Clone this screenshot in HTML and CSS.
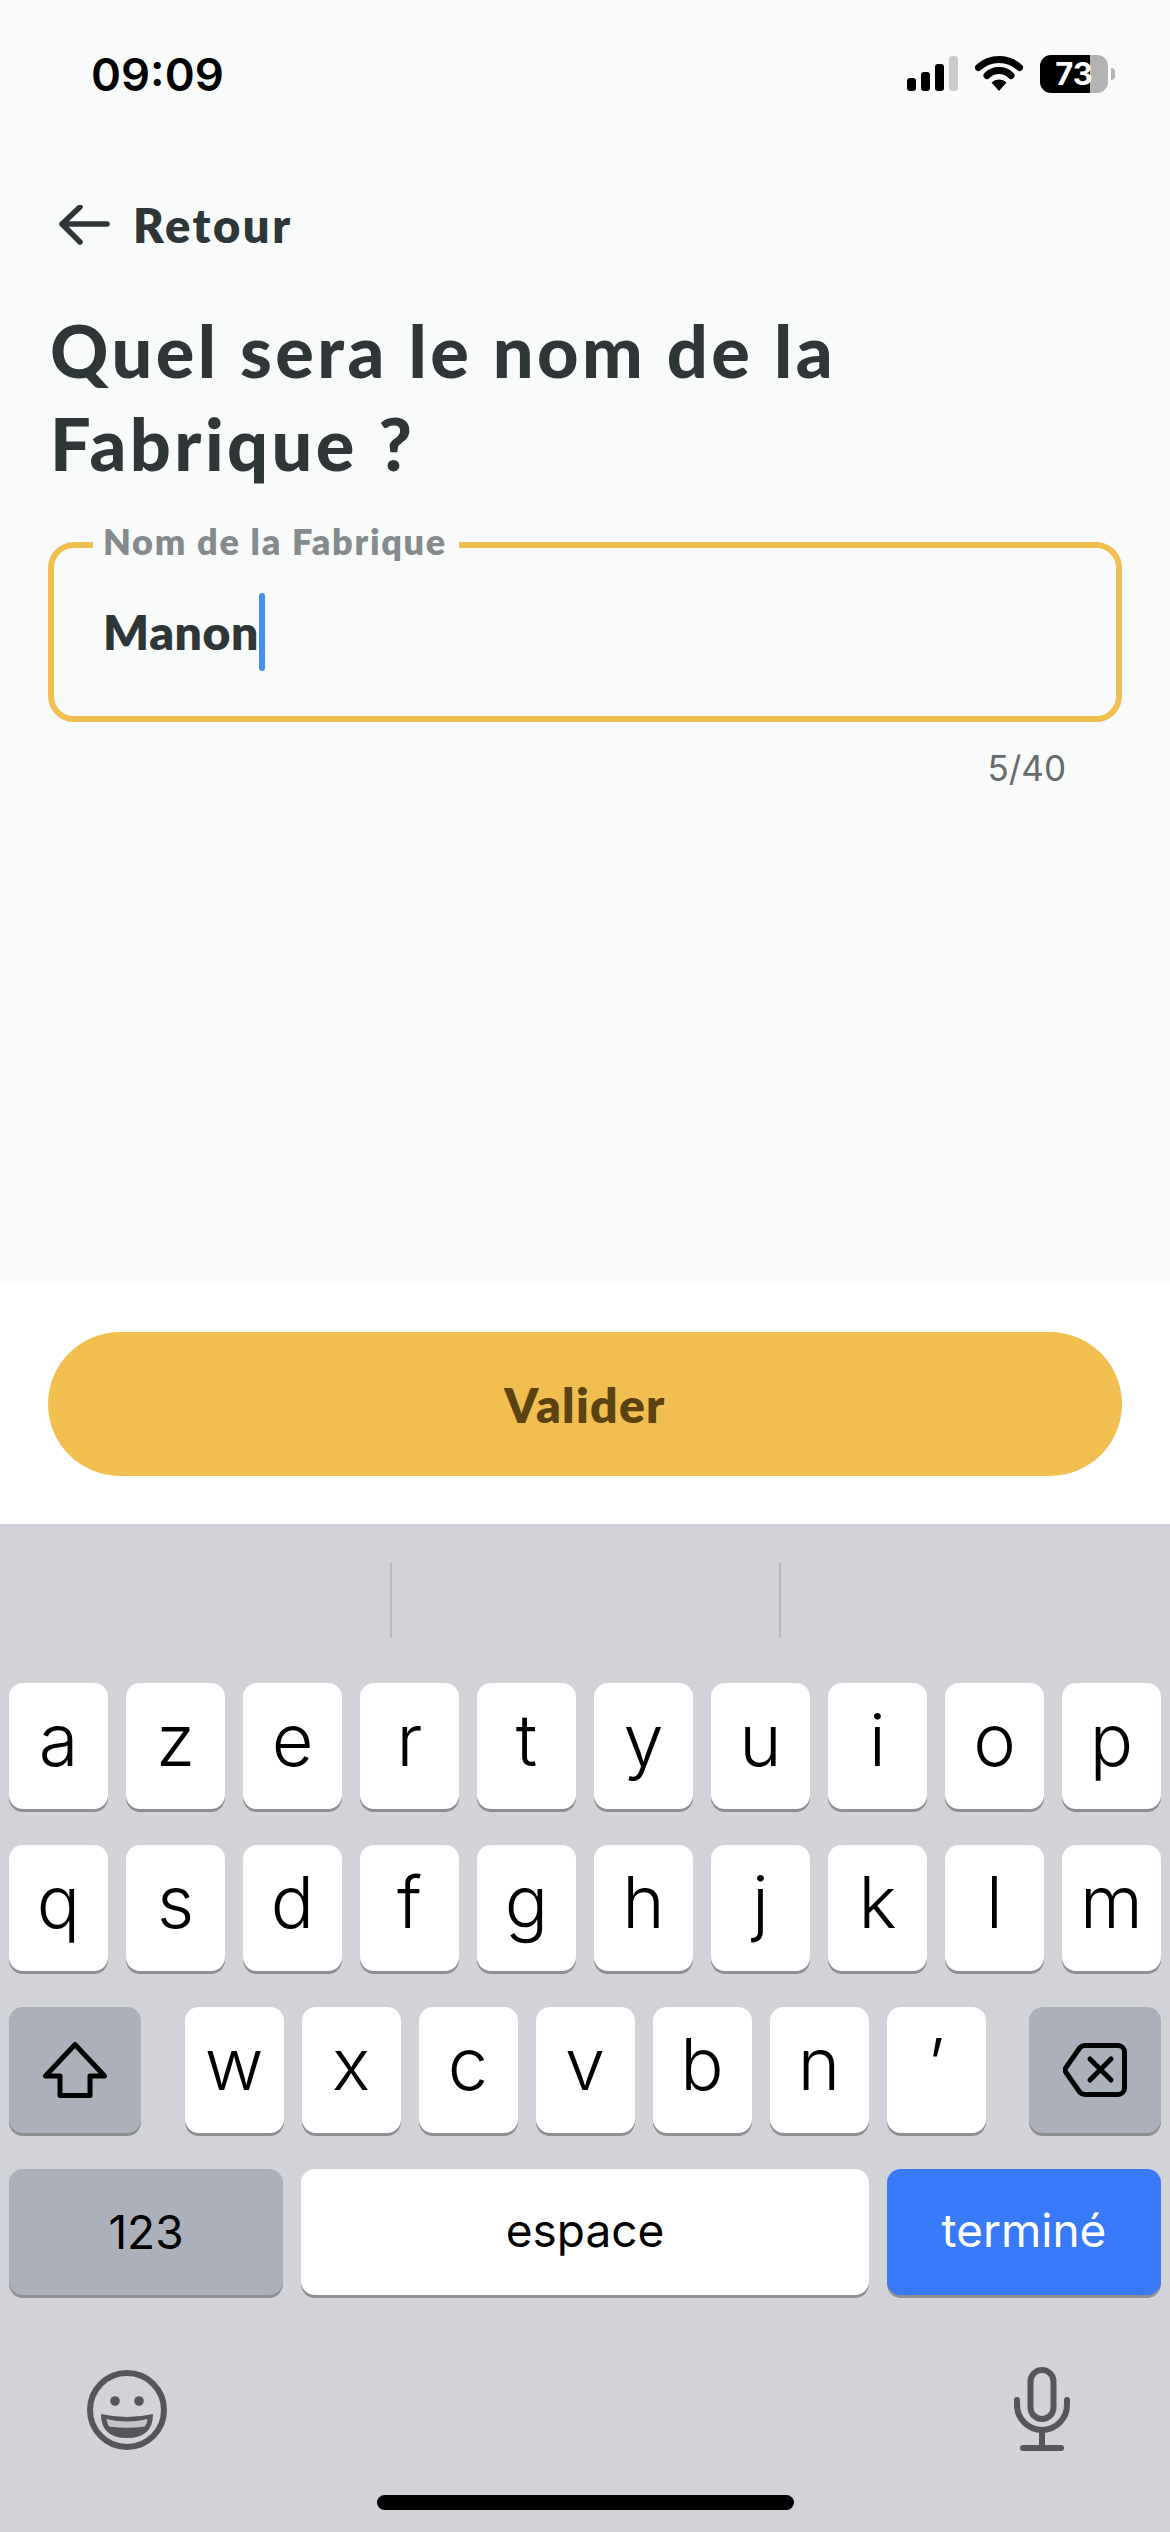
FILE: index.html
```html
<!DOCTYPE html>
<html lang="fr">
<head>
<meta charset="utf-8">
<title>Nom de la Fabrique</title>
<link rel="stylesheet" href="styles.css">
</head>
<body>
<div class="screen">
  <header class="status">
    <span class="time">09:09</span>
    <div class="status-icons">
      <svg class="signal" width="54" height="36" viewBox="0 0 54 36"><rect x="0" y="22" width="9" height="13" rx="3"/><rect x="14" y="16" width="9" height="19" rx="3"/><rect x="28" y="8" width="9" height="27" rx="3"/><rect x="42" y="0" width="9" height="35" rx="3" fill="#cbcccb"/></svg>
      <svg class="wifi" width="48" height="36" viewBox="0 0 48 36"><path d="M3.5 12.5A30 30 0 0 1 44.5 12.5" fill="none" stroke="#000" stroke-width="7" stroke-linecap="round"/><path d="M12 20.5A17 17 0 0 1 36 20.5" fill="none" stroke="#000" stroke-width="7" stroke-linecap="round"/><path d="M16.5 27.5A11 11 0 0 1 31.5 27.5L24 36Z"/></svg>
      <div class="battery"><div class="battery-body"><span class="battery-text">73</span></div><span class="battery-nub"></span></div>
    </div>
  </header>

  <main class="content">
    <a class="back">
      <svg width="52" height="40" viewBox="0 0 52 40"><path d="M49 19H4M22 2L4 19L22 37" fill="none" stroke="#2f3638" stroke-width="5.500" stroke-linecap="round" stroke-linejoin="round"/></svg>
      <span>Retour</span>
    </a>
    <h1 class="title">Quel sera le nom de la<br>Fabrique ?</h1>
    <div class="field">
      <span class="field-label">Nom de la Fabrique</span>
      <span class="field-value">Manon</span><span class="caret"></span>
    </div>
    <div class="counter">5/40</div>
  </main>

  <section class="footer"><button class="submit">Valider</button></section>

  <section class="keyboard">
    <div class="suggestions"><span class="sep"></span><span class="sep"></span></div>
    <div class="rows">
      <div class="row">
        <span class="key">a</span><span class="key">z</span><span class="key">e</span><span class="key">r</span><span class="key">t</span><span class="key">y</span><span class="key">u</span><span class="key">i</span><span class="key">o</span><span class="key">p</span>
      </div>
      <div class="row">
        <span class="key">q</span><span class="key">s</span><span class="key">d</span><span class="key">f</span><span class="key">g</span><span class="key">h</span><span class="key">j</span><span class="key">k</span><span class="key">l</span><span class="key">m</span>
      </div>
      <div class="row row-split">
        <span class="key key-mod">
          <svg width="66" height="58" viewBox="0 0 66 58"><path d="M33 3.500L3.500 35H18V54.500H48V35H62.500Z" fill="none" stroke="#000" stroke-width="5" stroke-linejoin="round"/></svg>
        </span>
        <div class="letters"><span class="key">w</span><span class="key">x</span><span class="key">c</span><span class="key">v</span><span class="key">b</span><span class="key">n</span><span class="key">’</span></div>
        <span class="key key-mod">
          <svg width="64" height="54" viewBox="0 0 64 54"><path d="M22 2.500H55A6.500 6.500 0 0 1 61.500 9V45A6.500 6.500 0 0 1 55 51.500H22Q19 51.500 17 49.500L3 29.500Q1.500 27 3 24.500L17 4.500Q19 2.500 22 2.500Z" fill="none" stroke="#000" stroke-width="5" stroke-linejoin="round"/><path d="M27 16L48 37M48 16L27 37" fill="none" stroke="#000" stroke-width="5" stroke-linecap="round"/></svg>
        </span>
      </div>
      <div class="row">
        <span class="key key-mod key-wide key-label">123</span>
        <span class="key key-space key-label key-raised">espace</span>
        <span class="key key-done key-label key-raised">terminé</span>
      </div>
    </div>
    <div class="kb-tools">
      <svg class="emoji" width="80" height="80" viewBox="0 0 80 80"><circle cx="40" cy="40" r="37" fill="none" stroke="#54565b" stroke-width="6"/><circle cx="28" cy="31" r="4.800" fill="#54565b"/><circle cx="52" cy="31" r="4.800" fill="#54565b"/><path d="M14 44Q40 50 66 44Q66 68 40 68Q14 68 14 44Z" fill="#54565b"/><path d="M19.500 49Q40 54 60.500 49Q60 54 58 56.500Q40 59 22 56.500Q20 54 19.500 49Z" fill="#c2c4c9"/></svg>
      <svg class="mic" width="56" height="84" viewBox="0 0 56 84"><rect x="16.500" y="3" width="23" height="49" rx="11.500" fill="none" stroke="#54565b" stroke-width="6"/><path d="M3 33V38A25 25 0 0 0 53 38V33M28 63V80M9 81H47" fill="none" stroke="#54565b" stroke-width="6" stroke-linecap="round"/></svg>
    </div>
    <div class="home-bar"></div>
  </section>
</div>
</body>
</html>
```
FILE: styles.css
```css
* { box-sizing: border-box; }
html, body { margin: 0; padding: 0; }
body { font-family: "Lato", "Noto Sans", sans-serif; background: #f9fbfa; }
.screen { width: 1170px; height: 2532px; display: flex; flex-direction: column; overflow: hidden; }

.status { height: 110px; display: flex; justify-content: space-between; padding: 47px 55px 0 91px; flex: none; }
.time { font-family: "Inter", sans-serif; font-weight: 600; font-size: 45.5px; line-height: 55px; color: #000; }
.status-icons { display: flex; align-items: flex-start; padding-top: 8px; }
.signal { margin: 1px 0 0 0; }
.wifi { margin: 0 0 0 14px; }
.battery { display: flex; align-items: center; margin-left: 17px; height: 38px; }
.battery-body { width: 68px; height: 38px; border-radius: 11px; background: linear-gradient(90deg, #000 0 74%, #b3b3b3 74% 100%); display: flex; align-items: center; justify-content: center; }
.battery-text { font-family: "Inter", sans-serif; font-weight: 700; font-size: 31px; line-height: 38px; color: #fff; }
.battery-nub { width: 4px; height: 12px; margin-left: 3px; background: #b3b3b3; border-radius: 0 4px 4px 0; }

.content { height: 1174px; flex: none; padding: 95px 48px 0; }
.back { display: flex; align-items: center; gap: 23px; padding-left: 10px; height: 40px; color: #2f3638; font-weight: 800; font-size: 47px; letter-spacing: 2.6px; line-height: 40px; }
.title { margin: 59px 0 0 2px; color: #2f3638; font-weight: 900; font-size: 72px; letter-spacing: 3.45px; line-height: 93px; }
.field { position: relative; margin-top: 52px; height: 180px; border: 6px solid #f1bf50; border-radius: 26px; padding: 0 0 0 49px; display: flex; align-items: center; }
.field-label { position: absolute; left: 39px; top: -27px; padding: 0 12px 0 10px; background: #f9fbfa; color: #858b8d; font-weight: 800; font-size: 36px; letter-spacing: 1.7px; line-height: 40px; }
.field-value { color: #2f3638; font-weight: 800; font-size: 48px; letter-spacing: 0.6px; line-height: 56px; }
.caret { width: 6px; height: 78px; border-radius: 3px; background: #4390f0; }
.counter { margin-top: 26px; padding-right: 56px; text-align: right; font-family: "Inter", sans-serif; font-size: 35px; line-height: 40px; color: #666a6c; }

.footer { height: 240px; flex: none; background: #fff; padding: 48px 48px; }
.submit { display: block; width: 100%; height: 144px; border: 0; border-radius: 72px; background: #f1bf50; color: #5a4311; font-family: inherit; font-weight: 800; font-size: 48px; letter-spacing: 1.3px; }

.keyboard { flex: 1; background: #d1d3d9; }
.suggestions { height: 159px; display: flex; justify-content: center; gap: 387px; padding-top: 39px; }
.sep { width: 2px; height: 75px; background: #b8b9be; }
.rows { display: flex; flex-direction: column; gap: 36px; padding: 0 9px; }
.row { display: flex; gap: 18px; }
.row-split { justify-content: space-between; gap: 0; }
.letters { display: flex; gap: 18px; }
.key { width: 99px; height: 126px; flex: none; display: flex; align-items: center; justify-content: center; background: #fff; border-radius: 14px; box-shadow: 0 3px 0 #8e8e93; color: #000; font-family: "Inter", sans-serif; font-weight: 300; font-size: 72px; line-height: 126px; padding-bottom: 12px; }
.key-mod { width: 132px; background: #abb0ba; padding-bottom: 0; }
.key-wide { width: 274px; }
.key-space { width: 568px; }
.key-done { width: 274px; background: #3779f6; color: #fff; }
.key-label { font-size: 46px; font-weight: 400; padding-bottom: 0; }
.key-raised { padding-bottom: 5px; }
.kb-tools { display: flex; justify-content: space-between; align-items: flex-end; margin-top: 72px; padding: 0 100px 0 87px; height: 84px; }
.emoji { margin-bottom: 1px; }
.home-bar { width: 417px; height: 15px; margin: 44px auto 0; border-radius: 8px; background: #000; }
```
